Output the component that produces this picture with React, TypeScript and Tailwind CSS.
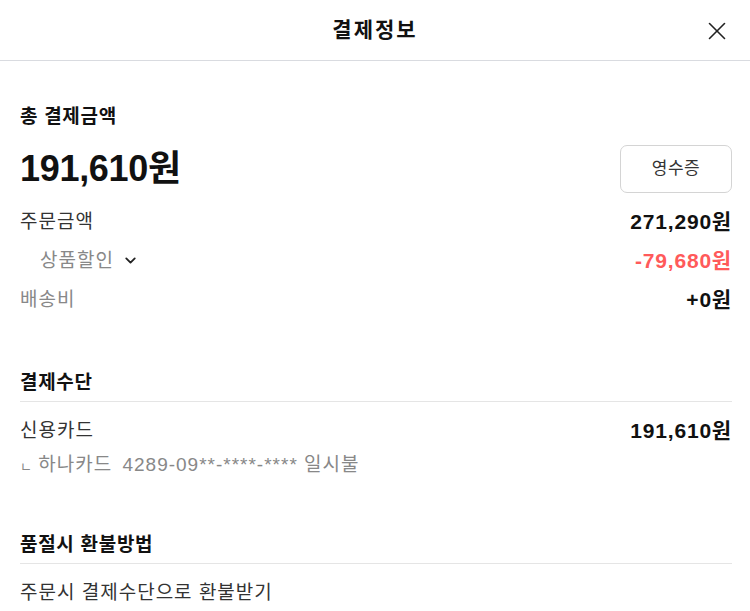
import { ChevronDown, X } from 'lucide-react';

const font = { fontFamily: '"Liberation Sans", "Noto Sans CJK KR", sans-serif' };

function Row({ label, value, labelClass, valueClass }: { label: React.ReactNode; value: string; labelClass: string; valueClass: string }) {
  return (
    <div className="flex items-center justify-between h-[39px]">
      <div className={labelClass}>{label}</div>
      <div className={valueClass}>{value}</div>
    </div>
  );
}

export default function App() {
  return (
    <div className="w-[750px] h-[611px] bg-white text-[#111] overflow-hidden" style={font}>
      {/* Header */}
      <header className="relative h-[61px] flex items-center justify-center border-b border-[#d9dbe0]">
        <h1 className="text-[21px] font-bold leading-[28px] tracking-[2px]">결제정보</h1>
        <button className="absolute right-[18px] top-[16px] text-[#222]">
          <X className="w-[30px] h-[30px]" strokeWidth={1.3} />
        </button>
      </header>

      <div className="pl-[20px] pr-[18px]">
        {/* Total */}
        <section className="pt-[44px]">
          <div className="text-[19px] font-bold leading-[24px] tracking-[0.7px]">총 결제금액</div>
          <div className="flex items-center justify-between mt-[16px]">
            <div className="text-[36px] font-bold leading-[40px] tracking-[-0.3px]">191,610원</div>
            <button className="w-[112px] h-[48px] rounded-[7px] border border-[#d4d4d4] text-[17px] text-[#333] tracking-[0.5px]">
              영수증
            </button>
          </div>
          <div className="mt-[9px]">
            <Row label="주문금액" value="271,290원" labelClass="text-[19px] text-[#333] leading-[24px] tracking-[1px]" valueClass="text-[21px] font-bold leading-[24px] tracking-[0.8px]" />
            <Row
              label={
                <span className="flex items-center gap-[8px] pl-[20px]">
                  상품할인
                  <ChevronDown className="w-[17px] h-[17px] text-[#222]" strokeWidth={2.6} />
                </span>
              }
              value="-79,680원"
              labelClass="text-[19px] text-[#888] leading-[24px] tracking-[1px]"
              valueClass="text-[21px] font-bold text-[#ff5a5a] leading-[24px] tracking-[0.8px]"
            />
            <Row label="배송비" value="+0원" labelClass="text-[19px] text-[#888] leading-[24px] tracking-[1px]" valueClass="text-[21px] font-bold leading-[24px] tracking-[0.8px]" />
          </div>
        </section>

        {/* Payment method */}
        <section className="mt-[52px]">
          <div className="text-[19px] font-bold leading-[24px] tracking-[0.7px] pb-[6px] border-b border-[#e5e5e5]">결제수단</div>
          <div className="flex items-center justify-between mt-[17px] h-[24px]">
            <div className="text-[19px] text-[#333] tracking-[1px]">신용카드</div>
            <div className="text-[21px] font-bold tracking-[0.8px]">191,610원</div>
          </div>
          <div className="mt-[10px] text-[19px] text-[#888] leading-[24px] tracking-[1px]">
            <span className="text-[13px] tracking-normal">ㄴ</span> 하나카드 <span className="ml-[4px]">4289-09**-****-****</span> 일시불
          </div>
        </section>

        {/* Refund */}
        <section className="mt-[54px]">
          <div className="text-[19px] font-bold leading-[24px] tracking-[0.7px] pb-[6px] border-b border-[#e5e5e5]">품절시 환불방법</div>
          <div className="mt-[17px] text-[19px] text-[#333] leading-[24px] tracking-[1px]">주문시 결제수단으로 환불받기</div>
        </section>
      </div>
    </div>
  );
}
